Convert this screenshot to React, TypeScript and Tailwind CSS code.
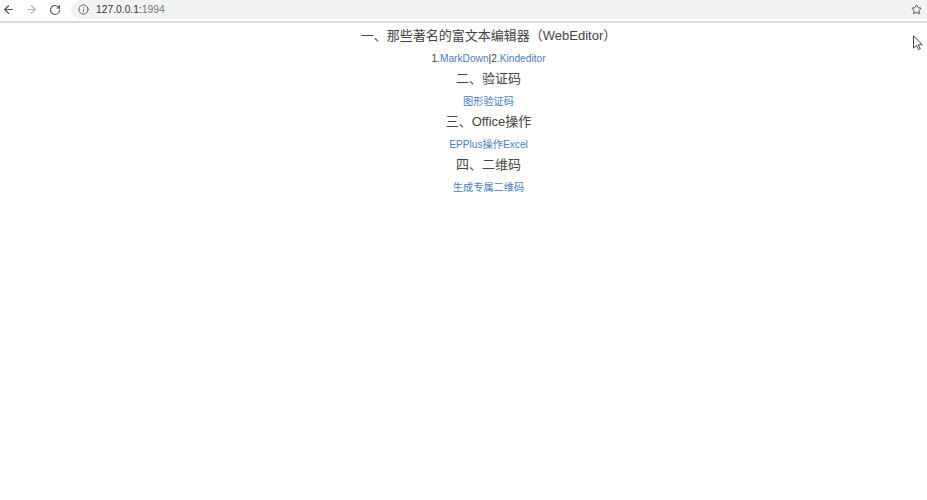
import { ArrowLeft, ArrowRight, RotateCw, Info, Star } from 'lucide-react'

const sections = [
  { title: '一、那些著名的富文本编辑器（WebEditor）', links: [['1.', 'MarkDown'], ['|2.', 'Kindeditor']] },
  { title: '二、验证码', links: [['', '图形验证码']] },
  { title: '三、Office操作', links: [['', 'EPPlus操作Excel']] },
  { title: '四、二维码', links: [['', '生成专属二维码']] },
]

export default function App() {
  return (
    <div className="relative h-[500px] w-[927px] overflow-hidden bg-white font-['Liberation_Sans','Noto_Sans_CJK_SC',sans-serif] text-[#444]">
      {/* Browser bar */}
      <header className="flex h-[23px] items-center border-b-2 border-[#dcdcdc] bg-white pb-[2px]">
        <ArrowLeft className="ml-[2px] h-[13px] w-[13px] text-[#555]" strokeWidth={2.2} />
        <ArrowRight className="ml-[10px] h-[13px] w-[13px] text-[#b5b5b5]" strokeWidth={2.2} />
        <RotateCw className="ml-[11px] h-[12px] w-[12px] text-[#555]" strokeWidth={2.4} />
        <div className="ml-[10px] flex h-[19px] flex-1 items-center rounded-l-full bg-[#f2f4f4] pl-[7px]">
          <Info className="h-[11px] w-[11px] text-[#555]" strokeWidth={2} />
          <span className="ml-[7px] text-[10.3px] text-[#333]">
            127.0.0.1:<span className="text-[#777]">1994</span>
          </span>
          <Star className="ml-auto mr-[5px] h-[11px] w-[11px] text-[#444]" strokeWidth={2} />
        </div>
      </header>

      {/* Content */}
      <main className="flex flex-col items-center pl-[50px] pt-[4px]">
        {sections.map((s) => (
          <section key={s.title} className="flex flex-col items-center">
            <h2 className="h-[21px] text-[13px] leading-[18px] font-normal">{s.title}</h2>
            <p className="h-[22px] text-[10.2px] leading-[22px]">
              {s.links.map(([prefix, label]) => (
                <span key={label}>
                  {prefix}
                  <a className="text-[#4a80bd]">{label}</a>
                </span>
              ))}
            </p>
          </section>
        ))}
      </main>

      {/* Mouse cursor */}
      <svg className="absolute left-[912px] top-[35px]" width="12" height="16" viewBox="0 0 12 16">
        <path d="M1.5 1v12l3-2.6 2 4.2 1.8-.8-2-4.1h4z" fill="#fff" stroke="#444" strokeWidth="1" />
      </svg>
    </div>
  )
}
